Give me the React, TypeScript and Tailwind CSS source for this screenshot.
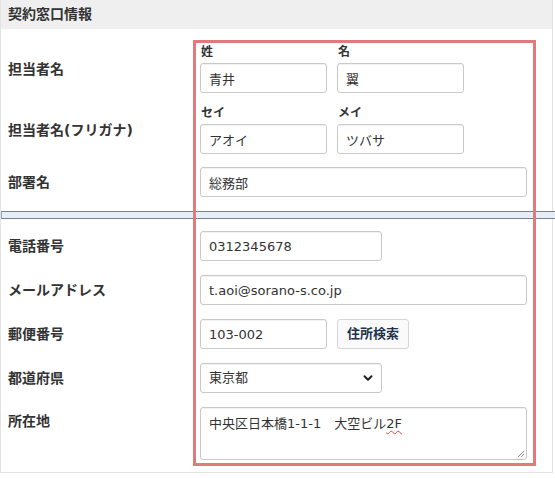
import React from 'react';

const font = { fontFamily: '"DejaVu Sans", "Noto Sans CJK JP", sans-serif' };

const inputCls =
  'h-[30px] rounded-[3px] border border-[#c9c9c9] bg-white pl-[8px] text-[13px] text-[#333] shadow-[inset_0_1px_1px_rgba(0,0,0,0.06)] outline-none';

const Label = ({ children, top = false }: { children: React.ReactNode; top?: boolean }) => (
  <div
    className={`pl-[7px] text-[14px] font-bold leading-[20px] text-[#333] ${
      top ? 'self-start pt-[11px]' : 'self-center'
    }`}
  >
    {children}
  </div>
);

const SubField = ({ label, value }: { label: string; value: string }) => (
  <div className="flex flex-col">
    <span className="mb-[3px] h-[16px] pl-[1px] text-[12px] font-bold leading-[16px] text-[#333]">{label}</span>
    <input readOnly value={value} className={`${inputCls} w-[127px]`} />
  </div>
);

export default function App() {
  return (
    <div className="relative h-[478px] w-[555px] overflow-hidden bg-white" style={font}>
      <div className="w-[553px] border-x border-b border-[#e3e3e3] pb-[12px]">
        <div className="flex h-[29px] items-center bg-[#efefef] pl-[7px] text-[14px] font-bold text-[#333]">
          契約窓口情報
        </div>

        <div className="mt-[9px] grid grid-cols-[199px_1fr]">
          {/* name */}
          <Label>担当者名</Label>
          <div className="flex gap-[10px] py-[6px]">
            <SubField label="姓" value="青井" />
            <SubField label="名" value="翼" />
          </div>

          <Label>担当者名(フリガナ)</Label>
          <div className="flex gap-[10px] py-[6px]">
            <SubField label="セイ" value="アオイ" />
            <SubField label="メイ" value="ツバサ" />
          </div>

          <Label>部署名</Label>
          <div className="py-[7px]">
            <input readOnly value="総務部" className={`${inputCls} w-[327px]`} />
          </div>
        </div>

        {/* omission divider */}
        <div className="mt-[7px] mb-[5px] h-[8px] w-[554px] border-y border-l border-y-[#77828f] border-l-[#9aa5b1] bg-[#e8eef6]" />

        <div className="grid grid-cols-[199px_1fr]">
          <Label>電話番号</Label>
          <div className="py-[7px]">
            <input readOnly value="0312345678" className={`${inputCls} w-[182px]`} />
          </div>

          <Label>メールアドレス</Label>
          <div className="py-[7px]">
            <input readOnly value="t.aoi@sorano-s.co.jp" className={`${inputCls} w-[327px]`} />
          </div>

          <Label>郵便番号</Label>
          <div className="flex gap-[10px] py-[7px]">
            <input readOnly value="103-002" className={`${inputCls} w-[127px]`} />
            <button className="h-[30px] w-[72px] rounded-[3px] border border-[#d6d6d6] bg-[#fafafa] text-[13px] font-bold text-[#22324a]">
              住所検索
            </button>
          </div>

          <Label>都道府県</Label>
          <div className="py-[7px]">
            <div className={`${inputCls} flex w-[182px] items-center justify-between pr-[8px]`}>
              <span>東京都</span>
              <svg width="10" height="10" viewBox="0 0 10 10" fill="none">
                <path d="M1.5 3.2 5 6.7 8.5 3.2" stroke="#222" strokeWidth="2" strokeLinecap="round" strokeLinejoin="round" />
              </svg>
            </div>
          </div>

          <Label top>所在地</Label>
          <div className="pt-[7px]">
            <div className="relative h-[53px] w-[327px] rounded-[3px] border border-[#c9c9c9] bg-white pl-[8px] pt-[7px] text-[13px] leading-[18px] text-[#333] shadow-[inset_0_1px_1px_rgba(0,0,0,0.06)]">
              中央区日本橋1-1-1　大空ビル
              <span className="underline decoration-[#e0453a] decoration-wavy decoration-1 underline-offset-2">2F</span>
              <svg className="absolute right-[1px] bottom-[1px]" width="9" height="9" viewBox="0 0 9 9">
                <path d="M8 2 2 8M8 5 5 8" stroke="#8a8a8a" strokeWidth="1" />
              </svg>
            </div>
          </div>
        </div>
      </div>

      {/* annotation highlight */}
      <div className="pointer-events-none absolute left-[193px] top-[40px] h-[426px] w-[343px] border-[3px] border-[#e07b7b]" />
    </div>
  );
}
